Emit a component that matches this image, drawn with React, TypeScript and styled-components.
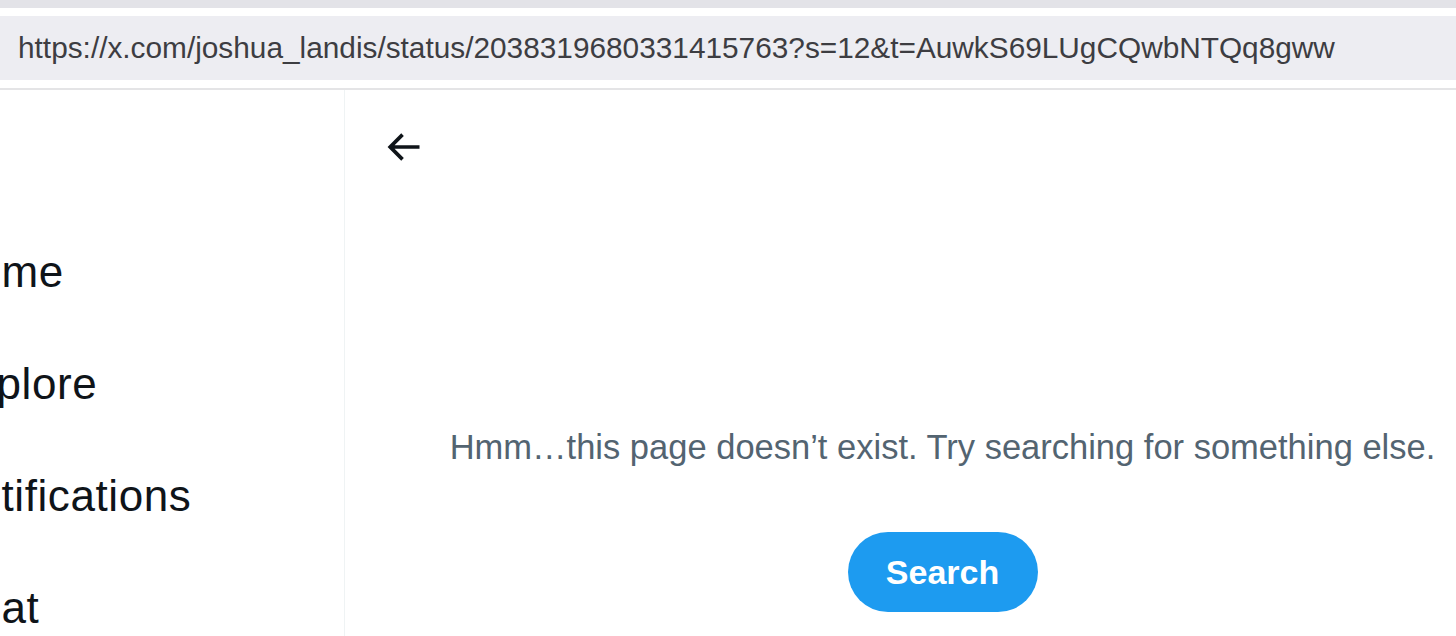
import React from "react";
import styled, { createGlobalStyle } from "styled-components";
import { Home, Search, Bell, Mail } from "lucide-react";

const GlobalStyle = createGlobalStyle`
  html, body {
    margin: 0;
    padding: 0;
    background: #ffffff;
    overflow: hidden;
  }
  * {
    box-sizing: border-box;
  }
`;

const navItems = [
  { label: "Home", Icon: Home },
  { label: "Explore", Icon: Search },
  { label: "Notifications", Icon: Bell },
  { label: "Chat", Icon: Mail },
];

function BackArrow() {
  return (
    <svg viewBox="0 0 24 24" width="44" height="44" aria-hidden="true">
      <path
        fill="#0f1419"
        d="M7.414 13l5.043 5.04-1.414 1.42L3.586 12l7.457-7.46 1.414 1.42L7.414 11H21v2H7.414z"
      />
    </svg>
  );
}

function App() {
  const url =
    "https://x.com/joshua_landis/status/2038319680331415763?s=12&t=AuwkS69LUgCQwbNTQq8gww";
  return (
    <>
      <GlobalStyle />
      <Window>
        <TopStrip />
        <UrlRow>
          <UrlBar>{url}</UrlBar>
        </UrlRow>
        <Body>
          <Sidebar>
            <Nav>
              {navItems.map(({ label, Icon }) => (
                <NavItem key={label}>
                  <Icon size={52} strokeWidth={1.8} />
                  <NavLabel>{label}</NavLabel>
                </NavItem>
              ))}
            </Nav>
          </Sidebar>
          <Main>
            <Header>
              <BackButton aria-label="Back">
                <BackArrow />
              </BackButton>
            </Header>
            <EmptyState>
              <Message>
                Hmm…this page doesn’t exist. Try searching for something else.
              </Message>
              <SearchBtn>Search</SearchBtn>
            </EmptyState>
          </Main>
        </Body>
      </Window>
    </>
  );
}

export default App;

const Window = styled.div`
  width: 100vw;
  height: 100vh;
  display: flex;
  flex-direction: column;
  overflow: hidden;
`;

const TopStrip = styled.div`
  height: 8px;
  background: #e3e3e8;
  flex-shrink: 0;
`;

const UrlRow = styled.div`
  padding: 8px 0;
  background: #ffffff;
  border-bottom: 2px solid #e4e4e6;
  flex-shrink: 0;
`;

const UrlBar = styled.div`
  height: 64px;
  display: flex;
  align-items: center;
  padding-left: 18px;
  background: #ededf2;
  color: #3d3d42;
  font-family: "Liberation Sans", Arial, sans-serif;
  font-size: 29.8px;
  white-space: nowrap;
`;

const Body = styled.div`
  flex: 1;
  display: flex;
  min-height: 0;
`;

const Sidebar = styled.div`
  width: 345px;
  flex-shrink: 0;
  display: flex;
  justify-content: flex-end;
  overflow: hidden;
  border-right: 1px solid #eff3f4;
`;

const Nav = styled.nav`
  width: 498px;
  flex-shrink: 0;
  display: flex;
  flex-direction: column;
  padding-top: 126px;
`;

const NavItem = styled.a`
  height: 112px;
  display: flex;
  align-items: center;
  gap: 46px;
  color: #0f1419;
  text-decoration: none;
  svg {
    flex-shrink: 0;
  }
`;

const NavLabel = styled.span`
  font-family: "Liberation Sans", Arial, sans-serif;
  font-size: 44px;
  line-height: 112px;
  letter-spacing: 0.6px;
  white-space: nowrap;
`;

const Main = styled.main`
  width: 1195px;
  flex-shrink: 0;
  display: flex;
  flex-direction: column;
`;

const Header = styled.div`
  height: 114px;
  display: flex;
  align-items: center;
  padding-left: 36px;
`;

const BackButton = styled.div`
  width: 44px;
  height: 44px;
  display: flex;
  align-items: center;
  justify-content: center;
`;

const EmptyState = styled.div`
  display: flex;
  flex-direction: column;
  align-items: center;
  padding-top: 220px;
`;

const Message = styled.p`
  margin: 0;
  color: #536471;
  font-family: "Liberation Sans", Arial, sans-serif;
  font-size: 34.5px;
  line-height: 46px;
  white-space: nowrap;
`;

const SearchBtn = styled.button`
  margin-top: 62px;
  width: 190px;
  height: 80px;
  border: none;
  border-radius: 999px;
  background: #1d9bf0;
  color: #ffffff;
  font-family: "Liberation Sans", Arial, sans-serif;
  font-weight: 700;
  font-size: 34px;
  cursor: pointer;
`;
